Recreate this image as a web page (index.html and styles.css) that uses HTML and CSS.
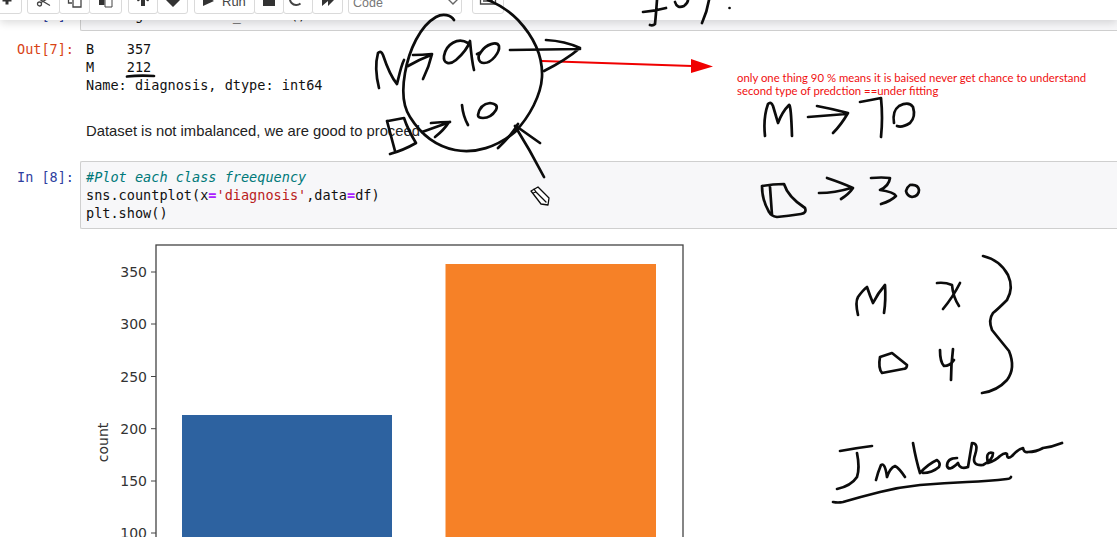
FILE: index.html
```html
<!DOCTYPE html>
<html lang="en">
<head>
    <meta charset="UTF-8">
    <title>Notebook with pen notes</title>
    <link rel="stylesheet" href="styles.css">
</head>
<body>
    <div class="toolbar">
        <div class="group first">
            <div class="btn"><svg class="icon" viewBox="0 0 16 16"><path d="M6.500 -2h3v4h3v2.500h-3v3h-3v-3h-3V2h3z"/></svg></div>
        </div>
        <div class="group cells">
            <div class="btn"><svg class="icon line" viewBox="0 0 16 16"><circle cx="3.500" cy="7" r="2"/><path d="M5 5.500L14.500 0M3 2L14 8.500"/></svg></div>
            <div class="btn"><svg class="icon line" viewBox="0 0 16 16"><path d="M5 6H1.500V-2h8v3M6 2h8v8H6z"/></svg></div>
            <div class="btn"><svg class="icon" viewBox="0 0 16 16"><path d="M1 -3h9v4H6.500v7H1z"/><path class="paper" d="M7 2h7v8H7z"/></svg></div>
        </div>
        <div class="group moves">
            <div class="btn"><svg class="icon" viewBox="0 0 16 16"><path d="M8 -5L15 2L13 4.500L10 2.500V9H6V2.500L3 4.500L1 2z"/></svg></div>
            <div class="btn"><svg class="icon" viewBox="0 0 16 16"><path d="M8 10L15 3L13 .5L10 2.500V-5H6V2.500L3 .5L1 3z"/></svg></div>
        </div>
        <div class="group actions">
            <div class="btn run"><svg class="play" viewBox="0 0 11 16"><path d="M0 -3L11 4L0 9z"/></svg><span>Run</span></div>
            <div class="btn"><svg class="icon" viewBox="0 0 16 16"><path d="M2 -5h12V9H2z"/></svg></div>
            <div class="btn"><svg class="icon line thick" viewBox="0 0 16 16"><path d="M10.500 6.500A6.500 6.500 0 1 1 10.500 -3.500"/></svg></div>
            <div class="btn"><svg class="icon" viewBox="0 0 16 16"><path d="M2 -5L8 -1V-5L15 2L8 9V4L2 9z"/></svg></div>
        </div>
        <div class="select"><span>Code</span><svg class="chev" viewBox="0 0 12 8"><path d="M1 0l5 5 5-5"/></svg></div>
        <div class="btn keys"><svg class="icon line" viewBox="0 0 16 16"><path d="M.5 -3h15v10H.5zM3 4h10"/></svg></div>
    </div>

    <div class="row cell-seven">
        <div class="prompt in">In [7]:</div>
        <div class="input"><pre>df.diagnosis.value_counts()</pre></div>
    </div>

    <div class="row output">
        <div class="prompt out">Out[7]:</div>
        <pre>B    357
M    212
Name: diagnosis, dtype: int64</pre>
    </div>

    <p class="markdown">Dataset is not imbalanced, we are good to proceed</p>

    <div class="row">
        <div class="prompt in">In [8]:</div>
        <div class="input"><pre><span class="comment">#Plot each class freequency</span>
sns.countplot(x<span class="op">=</span><span class="str">'diagnosis'</span>,data<span class="op">=</span>df)
plt.show()</pre></div>
    </div>

    <svg class="chart" viewBox="80 235 620 302">
        <rect class="bar-blue" x="182" y="415" width="210" height="130"/>
        <rect class="bar-orange" x="445.500" y="264" width="210.500" height="280"/>
        <rect class="axes" x="156" y="245" width="527" height="310"/>
        <path class="ticks" d="M151 272h5M151 324h5M151 376.500h5M151 428.700h5M151 481h5M151 533h5"/>
        <text class="tick" x="147" y="277">350</text>
        <text class="tick" x="147" y="329">300</text>
        <text class="tick" x="147" y="382">250</text>
        <text class="tick" x="147" y="434">200</text>
        <text class="tick" x="147" y="486">150</text>
        <text class="tick" x="147" y="538">100</text>
        <text class="ylabel" transform="translate(108 442.500) rotate(-90)">count</text>
    </svg>

    <div class="note">only one thing 90 % means it is baised never get chance to understand<br>second type of predction ==under fitting</div>

    <!-- pen strokes on top of the notebook -->
    <svg class="ink" viewBox="0 0 1117 537">
        <path class="red" d="M542 61L692 66"/>
        <polygon class="red-head" points="691,59 713,66.500 691,73"/>

        <!-- 212 underline -->
        <path d="M127 76.500Q140 75 154 76"/>

        <!-- circle and what is in it -->
        <path d="M454 20C451 15 443 13 436 17C420 26 409 50 405 73C402 90 402 105 410 117C420 133 435 146 455 150C475 154 497 147 515 132C530 116 541 95 542 77C543 55 532 35 518 20C510 12 498 4 488 0"/>
        <path d="M379 88C376 76 375 64 378 53Q381 50 383 55C386 64 390 76 397 84C399 76 401 66 404 60"/>
        <path d="M408 66Q418 60 431 55M413 55Q422 55 432 54Q429 67 423 79"/>
        <path d="M468 43C458 37 446 44 444 56C443 64 450 65 456 60C463 54 468 47 470 41C471 52 472 62 474 70"/>
        <path d="M481 52C477 56 478 63 484 63C492 63 500 52 499 46C497 41 486 44 481 52Q480 53 477 54"/>
        <path d="M510 50L580 49M546 40Q565 41 580 48Q566 60 544 71"/>
        <path d="M388 121L404 118Q408 130 416 143Q404 150 390 154M387 121L395 151"/>
        <path d="M422 132L450 122M431 123Q441 122 449 122Q444 130 435 137"/>
        <path d="M462 105Q463 116 468 125"/>
        <path d="M478 115Q480 104 490 103Q499 104 496 110Q491 118 483 118Q478 118 478 115"/>
        <path d="M516 126Q530 136 540 143M515 126Q530 150 544 177M518 124Q512 135 498 148"/>

        <!-- pencil cursor -->
        <path class="thin" d="M531 191L538 187L549 198L548 205L541 204zM534 189L536 192L533 193M536 192L546 202"/>

        <!-- top right -->
        <path d="M643 12Q655 11 666 8M657 0Q656 14 655 24Q653 26 650 25"/>
        <path d="M675 2Q677 9 684 6Q688 3 688 0"/>
        <path d="M709 0Q707 12 702 23"/>
        <path class="dot" d="M729.500 8h.1"/>

        <!-- M -> 70 -->
        <path d="M765 136Q763 118 768 104Q771 101 773 106Q776 116 778 123Q782 112 789 105Q791 104 792 136"/>
        <path d="M808 117L846 114M817 106Q833 109 848 113Q841 125 833 133"/>
        <path d="M860 102Q871 100 881 98Q883 118 881 137"/>
        <path d="M894 123Q892 111 899 106Q909 101 913 107Q916 117 910 123Q902 128 897 126"/>

        <!-- D -> 30 -->
        <path d="M762 186Q773 184 784 184Q788 197 805 208Q807 213 801 214Q788 216 777 217Q771 216 769 212Q762 200 762 186M770 187L772 215"/>
        <path d="M819 193Q835 193 851 188M827 178Q842 183 853 188Q849 194 841 199"/>
        <path d="M871 178Q882 177 890 178Q889 186 880 190Q894 192 896 196Q891 201 881 204"/>
        <path d="M910 185Q918 184 919 190Q919 196 912 197Q907 196 906 191Q907 187 910 185"/>

        <!-- M x / D y brace -->
        <path d="M858 315Q855 302 858 297Q863 290 867 287Q870 296 873 303Q878 293 885 285Q886 300 884 313"/>
        <path d="M937 283Q945 282 952 285Q953 297 959 306M960 283Q953 297 943 309"/>
        <path d="M880 357L892 353L907 365Q907 369 903 369L882 373Q878 368 880 357"/>
        <path d="M940 350Q940 362 944 366Q950 366 954 360M953 349Q951 365 951 380"/>
        <path d="M983 256Q1000 260 1008 275Q1014 288 1007 300Q998 309 993 313Q988 320 992 330Q1000 340 1009 351Q1016 368 1007 380Q997 391 982 393"/>

        <!-- Imbalance -->
        <path d="M840 451Q856 448 872 446M857 453Q860 468 857 477Q851 486 837 489"/>
        <path d="M876 480Q878 472 881 465Q885 462 887 477Q890 468 895 466Q899 468 905 477"/>
        <path d="M913 443Q916 460 920 473Q928 464 937 460Q941 463 939 467Q932 473 923 473"/>
        <path d="M957 458Q947 458 947 466Q949 472 958 463Q960 470 968 467Q970 455 972 443Q979 443 975 455Q971 466 983 465Q993 460 993 453Q985 451 988 463Q995 461 1000 456Q1005 452 1007 454Q1007 460 1012 456Q1018 449 1023 448Q1024 453 1028 452Q1036 452 1043 448Q1052 447 1062 443"/>
        <path d="M833 502Q838 503 843 502Q860 497 880 492Q900 487 920 485Q945 483 967 482Q990 481 1007 479Q1010 479 1011 477"/>
    </svg>
</body>
</html>
```

FILE: styles.css
```css
*{
    box-sizing: border-box;
}
body{
    margin: 0;
    height: 537px;
    overflow: hidden;
    position: relative;
    background: #fff;
    color: #111;
}
pre{
    margin: 0;
    font-family: "DejaVu Sans Mono", monospace;
    font-size: 13.550px;
    line-height: 18px;
}

/* toolbar, its top is cut off by the picture */
.toolbar{
    position: relative;
    z-index: 2;
    height: 20px;
    padding-bottom: 6px;
    display: flex;
    align-items: flex-end;
    gap: 6px;
    background: #fff;
    box-shadow: 0 3px 8px rgba(0, 0, 0, .14);
}
.group{
    display: flex;
}
.first{
    margin: 0 -1px 0 -8px;
}
.btn{
    width: 31px;
    height: 28px;
    margin-left: -1px;
    display: flex;
    align-items: flex-end;
    justify-content: center;
    background: #fff;
    border: 1px solid #dadada;
    border-radius: 3px;
    overflow: hidden;
    color: #444;
    font-family: "Liberation Sans", sans-serif;
    font-size: 13px;
    line-height: 14px;
}
.group .btn:first-child{
    margin-left: 0;
}
.first .btn{
    width: 30px;
}
.cells .btn{
    width: 33px;
}
.cells .btn:nth-child(2){
    width: 31px;
}
.moves .btn{
    width: 31px;
}
.moves .btn:first-child{
    width: 30px;
}
.actions .btn{
    width: 30px;
}
.actions .run{
    width: 61px;
    padding-left: 8px;
    justify-content: flex-start;
}
.actions .btn:last-child{
    width: 31px;
}
.run span{
    margin: 0 0 4px 8px;
}
.keys{
    width: 32px;
    margin-left: 4px;
}
.icon{
    width: 16px;
    height: 16px;
    flex: none;
    overflow: visible;
    fill: #333;
}
.icon.line{
    fill: none;
    stroke: #444;
    stroke-width: 1.300;
}
.icon.thick{
    stroke-width: 2;
}
.paper{
    fill: #fff;
    stroke: #444;
}
.play{
    width: 11px;
    height: 16px;
    flex: none;
    overflow: visible;
    fill: #333;
}
.select{
    width: 114px;
    height: 28px;
    margin-left: -1px;
    padding: 0 2px 0 4px;
    display: flex;
    align-items: flex-end;
    justify-content: space-between;
    border: 1px solid #dadada;
    border-radius: 3px;
    color: #777;
    font-family: "Liberation Sans", sans-serif;
    font-size: 12.500px;
    line-height: 14px;
}
.select span{
    margin-bottom: 3px;
}
.chev{
    width: 12px;
    height: 8px;
    margin-bottom: 6px;
    overflow: visible;
    fill: none;
    stroke: #666;
    stroke-width: 1.400;
}

/* cells */
.row{
    display: flex;
    align-items: flex-start;
}
.prompt{
    width: 80px;
    flex: none;
    padding: 7px 6px 0 0;
    text-align: right;
    font-family: "DejaVu Sans Mono", monospace;
    font-size: 13.500px;
    line-height: 18px;
}
.in{
    color: #303f9f;
}
.out{
    color: #d84315;
    padding-top: 0;
}
.input{
    flex: 1;
    padding: 6px 5px;
    background: #f7f7f9;
    border: 1px solid #cfcfcf;
    border-right: 0;
    border-radius: 2px 0 0 2px;
}
.cell-seven{
    margin-top: -21px;
}
.output{
    padding-top: 9px;
}
.output pre{
    padding-left: 6px;
}
.markdown{
    margin: 27px 0 20px 86px;
    font-family: "Liberation Sans", sans-serif;
    font-size: 14.800px;
    line-height: 20px;
    color: #222;
}
.comment{
    color: #007979;
    font-style: italic;
}
.op{
    color: #aa22ff;
    font-weight: bold;
}
.str{
    color: #ba2121;
}

/* matplotlib figure */
.chart{
    display: block;
    width: 620px;
    height: 302px;
    margin: 6px 0 0 80px;
}
.bar-blue{
    fill: #2d62a0;
}
.bar-orange{
    fill: #f68127;
}
.axes{
    fill: none;
    stroke: #444;
    stroke-width: 1.300;
}
.ticks{
    fill: none;
    stroke: #444;
}
.tick{
    text-anchor: end;
    font-family: "DejaVu Sans", sans-serif;
    font-size: 14px;
    fill: #333;
}
.ylabel{
    text-anchor: middle;
    font-family: "DejaVu Sans", sans-serif;
    font-size: 14px;
    fill: #333;
}

/* notes written over the page */
.note{
    position: absolute;
    left: 737px;
    top: 71px;
    z-index: 3;
    white-space: nowrap;
    font-family: Lato, sans-serif;
    font-size: 11.350px;
    line-height: 13px;
    color: #f01010;
}
.ink{
    position: absolute;
    left: 0;
    top: 0;
    z-index: 4;
    width: 1117px;
    height: 537px;
    fill: none;
    stroke: #0c0c0c;
    stroke-width: 2.700;
    stroke-linecap: round;
    stroke-linejoin: round;
}
.ink .red{
    stroke: #f00000;
    stroke-width: 1.800;
}
.ink .red-head{
    fill: #f00000;
    stroke: none;
}
.ink .thin{
    fill: #fff;
    stroke-width: 1.300;
}
.ink .dot{
    stroke-width: 2.600;
}
```
